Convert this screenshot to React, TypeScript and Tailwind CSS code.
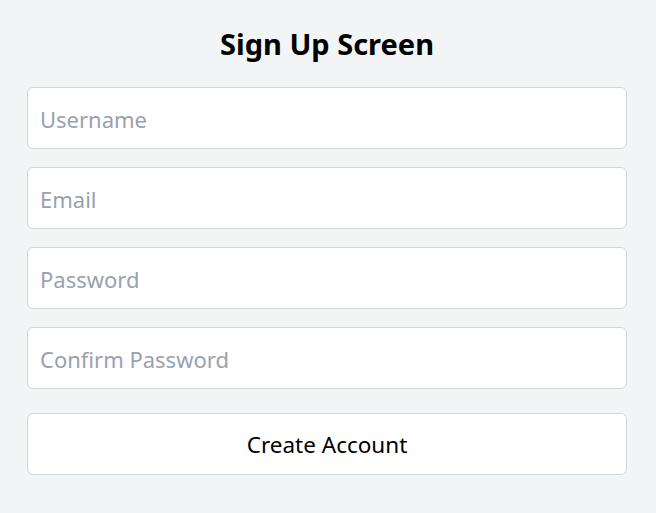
import React, { useState } from 'react';

const SignUpScreen: React.FC = () => {
  const [username, setUsername] = useState('');
  const [email, setEmail] = useState('');
  const [password, setPassword] = useState('');
  const [confirm, setConfirm] = useState('');

  const inputClass =
    'w-full h-[62px] px-3 pt-[2px] bg-white border border-gray-300 rounded-md text-[22px] text-gray-900 placeholder:text-gray-400 outline-none';

  return (
    <div
      className="min-h-[513px] bg-gray-100 pt-[26px]"
      style={{ fontFamily: '"Noto Sans", "Open Sans", sans-serif' }}
    >
      <div className="w-[600px] ml-[27px]">
        <h1 className="text-[29px] leading-[36px] font-bold text-center text-black mb-[25px]">
          Sign Up Screen
        </h1>

        <div className="flex flex-col gap-[18px]">
          <input
            type="text"
            value={username}
            onChange={(e) => setUsername(e.target.value)}
            placeholder="Username"
            className={inputClass}
          />
          <input
            type="email"
            value={email}
            onChange={(e) => setEmail(e.target.value)}
            placeholder="Email"
            className={inputClass}
          />
          <input
            type="password"
            value={password}
            onChange={(e) => setPassword(e.target.value)}
            placeholder="Password"
            className={inputClass}
          />
          <input
            type="password"
            value={confirm}
            onChange={(e) => setConfirm(e.target.value)}
            placeholder="Confirm Password"
            className={inputClass}
          />
        </div>

        <button className="w-full h-[62px] mt-[24px] pt-[2px] bg-white border border-gray-300 rounded-md text-[22.5px] text-black">
          Create Account
        </button>
      </div>
    </div>
  );
};

export default function App() {
  return <SignUpScreen />;
}
